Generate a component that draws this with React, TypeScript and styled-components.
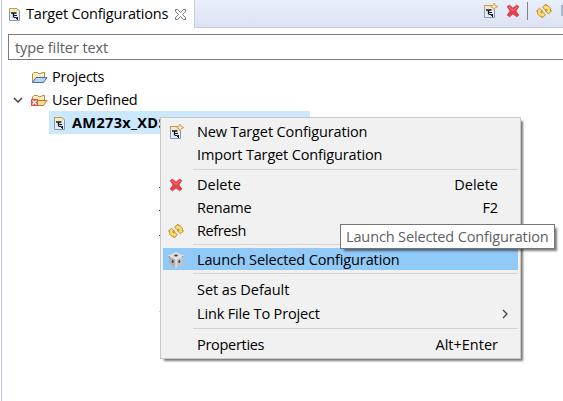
import React from "react";
import styled, { createGlobalStyle } from "styled-components";

const GlobalStyle = createGlobalStyle`
  * { box-sizing: border-box; }
  body { margin: 0; overflow: hidden; background: #fff; }
`;

const Window = styled.div`
  position: relative;
  width: 563px;
  height: 401px;
  overflow: hidden;
  background: #fff;
  color: #000;
  font-family: "Open Sans", "Noto Sans", sans-serif;
  font-size: 14.5px;
`;
const Panel = styled.div`
  margin-left: 1px;
  height: 401px;
  border-left: 1px solid #c5c6e0;
`;
const TabBar = styled.div`
  display: flex;
  height: 28px;
`;
const Tab = styled.div`
  display: flex;
  flex: none;
  align-items: center;
  width: 193px;
  height: 28px;
  padding: 0 0 0 5px;
  border-right: 1px solid #c9cde6;
`;
const Tools = styled.div`
  flex: 1;
  min-width: 0;
  overflow: hidden;
  display: flex;
  align-items: flex-start;
  padding: 3px 0 0 287px;
  background: linear-gradient(#eaeffc, #dce2f2);
  border-bottom: 1px solid #c5c9df;
`;
const ToolDivider = styled.div`
  flex: none;
  width: 1px;
  height: 18px;
  margin: -1px 8px 0 6px;
  background: #7d8088;
`;
const ClippedTool = styled.div`
  flex: none;
  width: 8px;
  height: 11px;
  margin: 2px 0 0 9px;
  background: #a9b7c9;
`;
const Text = styled.span<{ $space?: number; $bold?: boolean; $color?: string }>`
  white-space: nowrap;
  line-height: 20px;
  letter-spacing: ${(p) => p.$space ?? -0.13}px;
  font-weight: ${(p) => (p.$bold ? 700 : 400)};
  color: ${(p) => p.$color ?? "#000"};
`;
const Filter = styled.div`
  display: flex;
  align-items: center;
  width: 570px;
  height: 26px;
  margin: 6px 0 5px 6px;
  padding: 2px 0 0 6px;
  border: 1px solid #7a7a7a;
`;
const TreeRow = styled.div`
  display: flex;
  align-items: center;
  height: 23px;
  padding-left: 11px;
`;
const Twisty = styled.div`
  display: flex;
  width: 18px;
`;
const IconCell = styled.div<{ $w: number }>`
  display: flex;
  flex: none;
  width: ${(p) => p.$w}px;
`;
const Selected = styled.div`
  display: flex;
  align-items: center;
  width: 261px;
  height: 23px;
  margin-left: 47px;
  padding-left: 3px;
  background: #cce8ff;
`;
const Menu = styled.div`
  position: absolute;
  left: 160px;
  top: 117px;
  width: 361px;
  height: 242px;
  padding: 2px;
  background: #f1f1f1;
  border: 1px solid #c8c8c8;
  box-shadow: 3px 3px 2px -1px #777;
`;
const Item = styled.div<{ $active?: boolean; $h: number }>`
  display: flex;
  align-items: center;
  height: ${(p) => p.$h}px;
  padding: ${(p) => (p.$active ? 2 : 0)}px 20px 0 5px;
  background: ${(p) => (p.$active ? "#91c9f7" : "transparent")};
`;
const Shortcut = styled.div`
  display: flex;
  margin-left: auto;
`;
const Chevron = styled.div`
  display: flex;
  margin: 0 -11px 0 auto;
`;
const Separator = styled.div<{ $top: number; $bottom: number }>`
  height: 1px;
  margin: ${(p) => p.$top}px 0 ${(p) => p.$bottom}px 30px;
  background: #d2d2d2;
`;
const Tooltip = styled.div`
  position: absolute;
  left: 340px;
  top: 224px;
  display: flex;
  align-items: center;
  width: 215px;
  height: 25px;
  padding: 1px 0 0 5px;
  background: #fff;
  border: 1px solid #767676;
  box-shadow: 3px 3px 2px -1px rgba(0, 0, 0, 0.5);
`;
const Artifact = styled.div<{ $y: number; $c: string }>`
  position: absolute;
  left: 159px;
  top: ${(p) => p.$y}px;
  width: 1px;
  height: 1px;
  background: ${(p) => p.$c};
`;

const Svg = styled.svg`
  display: block;
  flex: none;
  overflow: visible;
`;

const TargetFile = ({ fresh = false }: { fresh?: boolean }) => (
  <Svg width="16" height="16" viewBox="0 0 16 16">
    <path d="M2.500 2.500h7.500l2.500 2.500v9.500h-10z" fill="#e6eff9" stroke="#8496b4" />
    <path d="M2.500 6V2.500h7.500l2.500 2.500v1" fill="#f5e8bd" stroke="#bd9f5c" />
    <path d="M4 7h5.500M6.500 7v4.500" fill="none" stroke="#15161c" strokeWidth="1.300" />
    <path d="M7 9.500h3M7 11.500h2.500v1.500M10.500 11v3" fill="none" stroke="#15161c" />
    {fresh && (
      <path
        d="M11.500.5h1l.5 2 2.500.5v1l-2.500.5-.5 2h-1l-.5-2L9 4V3l2-.5z"
        fill="#fff3cf"
        stroke="#c79e4e"
        strokeWidth=".9"
      />
    )}
  </Svg>
);
const Cross = () => (
  <Svg width="16" height="16" viewBox="0 0 16 16">
    <path
      d="M2.300 3.500 4.500 2.300 8 5.300 11.500 2.300 13.700 3.500 10.800 8 13.700 12 11.700 13.700 8 10.800 4.500 13.700 2.300 12 5.200 8z"
      fill="#e8404a"
      stroke="#d23a45"
      strokeLinejoin="round"
    />
    <path d="M4 4l4 3.500L12 4" fill="none" stroke="#f48582" />
  </Svg>
);
const RefreshIcon = () => (
  <Svg width="16" height="16" viewBox="0 0 16 16" fill="#fcdc74" stroke="#b9831c" strokeWidth=".9" strokeLinejoin="round">
    <path d="M6.500 4.200 10 1v1.500c3.200 0 5 2.500 4.300 5.500h1.200L12.500 10.700 9.500 8h1.500c.2-1.400-.2-2-1-2V7.500z" />
    <path d="M9.500 11.800 6 15v-1.500c-3.200 0-5-2.500-4.300-5.500H.5L3.500 5.300 6.500 8H5c-.2 1.400.2 2 1 2V8.500z" />
  </Svg>
);
const Folder = ({ error = false }: { error?: boolean }) => (
  <Svg width="17" height="16" viewBox="0 0 17 16">
    <path d="M1.500 13V5L3 3.500h3.500L8 5l4-1.500h1.500V8" fill="#fcedb6" stroke="#b88b3b" />
    <path
      d="M1.500 13.500 5 8.500h11l-3.500 5z"
      fill={error ? "#f9dc91" : "#b3d3f7"}
      stroke={error ? "#b77a2f" : "#476da8"}
    />
    {error && (
      <>
        <path d="M0 7h7v7H0z" fill="#d9534b" />
        <path d="M1.500 8.500l4 4m0-4-4 4" stroke="#fff" strokeWidth="1.300" />
      </>
    )}
  </Svg>
);
const Cube = () => (
  <Svg width="16" height="16" viewBox="0 0 16 16">
    <path d="M.5 3.500 8 0l7.500 3.500L8 7z" fill="#dedede" />
    <path d="M.5 3.500 8 7v9L1.500 12z" fill="#b0b0b0" />
    <path d="M15.500 3.500 8 7v9l6.500-4z" fill="#c4c4c4" />
    <path d="M.5 3.500 8 7l7.500-3.500M8 7v9" fill="none" stroke="#f2f2f2" />
    <ellipse cx="8" cy="3.500" rx="1.800" ry=".9" fill="#444" />
    <ellipse cx="4.700" cy="9.500" rx=".9" ry="1.500" fill="#3a3a3a" />
    <ellipse cx="11.300" cy="9.500" rx=".9" ry="1.500" fill="#3a3a3a" />
    <path d="M1 4l1 .8M15 4l-1 .8" stroke="#777" />
  </Svg>
);
const CloseTab = () => (
  <Svg width="11" height="11" viewBox="0 0 11 11">
    <path
      d="M.5.5h2l3 3 3-3h2v2l-3 3 3 3v2h-2l-3-3-3 3h-2v-2l3-3-3-3z"
      fill="#fff"
      stroke="#696969"
      strokeWidth=".9"
    />
  </Svg>
);

export default function App() {
  return (
    <Window>
      <GlobalStyle />
      <Panel>
        <TabBar>
          <Tab>
            <IconCell $w={19}><TargetFile /></IconCell>
            <IconCell $w={149}><Text $space={-0.2}>Target Configurations</Text></IconCell>
            <CloseTab />
          </Tab>
          <Tools>
            <IconCell $w={23}><TargetFile fresh /></IconCell>
            <IconCell $w={16}><Cross /></IconCell>
            <ToolDivider />
            <IconCell $w={16}><RefreshIcon /></IconCell>
            <ClippedTool />
          </Tools>
        </TabBar>
        <Filter><Text $space={-0.08} $color="#606060">type filter text</Text></Filter>
        <TreeRow>
          <Twisty />
          <IconCell $w={21}><Folder /></IconCell>
          <Text $space={-0.25}>Projects</Text>
        </TreeRow>
        <TreeRow>
          <Twisty>
            <Svg width="10" height="6" viewBox="0 0 10 6">
              <path d="M1 1l4 4 4-4" fill="none" stroke="#404040" strokeWidth="1.500" />
            </Svg>
          </Twisty>
          <IconCell $w={21}><Folder error /></IconCell>
          <Text $space={-0.25}>User Defined</Text>
        </TreeRow>
        <Selected>
          <IconCell $w={20}><TargetFile /></IconCell>
          <Text $bold $space={0.35}>AM273x_XDS</Text>
        </Selected>
      </Panel>

      <Artifact $y={187} $c="#333" />
      <Artifact $y={210} $c="#333" />
      <Artifact $y={235} $c="#333" />
      <Artifact $y={311} $c="#efd3a0" />

      <Menu>
        <Item $h={23}>
          <IconCell $w={29}><TargetFile fresh /></IconCell>
          <Text>New Target Configuration</Text>
        </Item>
        <Item $h={24}>
          <IconCell $w={29} />
          <Text $space={-0.15}>Import Target Configuration</Text>
        </Item>
        <Separator $top={2} $bottom={3} />
        <Item $h={23}>
          <IconCell $w={29}><Cross /></IconCell>
          <Text $space={0}>Delete</Text>
          <Shortcut><Text $space={0}>Delete</Text></Shortcut>
        </Item>
        <Item $h={23}>
          <IconCell $w={29} />
          <Text $space={-0.2}>Rename</Text>
          <Shortcut><Text>F2</Text></Shortcut>
        </Item>
        <Item $h={23}>
          <IconCell $w={29}><RefreshIcon /></IconCell>
          <Text $space={-0.4}>Refresh</Text>
        </Item>
        <Separator $top={2} $bottom={3} />
        <Item $h={22} $active>
          <IconCell $w={29}><Cube /></IconCell>
          <Text>Launch Selected Configuration</Text>
        </Item>
        <Separator $top={3} $bottom={4} />
        <Item $h={24}>
          <IconCell $w={29} />
          <Text $space={-0.06}>Set as Default</Text>
        </Item>
        <Item $h={23}>
          <IconCell $w={29} />
          <Text $space={-0.16}>Link File To Project</Text>
          <Chevron>
            <Svg width="7" height="10" viewBox="0 0 7 10">
              <path d="M1 1l4 4-4 4" fill="none" stroke="#404040" strokeWidth="1.300" />
            </Svg>
          </Chevron>
        </Item>
        <Separator $top={3} $bottom={4} />
        <Item $h={23}>
          <IconCell $w={29} />
          <Text $space={-0.3}>Properties</Text>
          <Shortcut><Text $space={0}>Alt+Enter</Text></Shortcut>
        </Item>
      </Menu>

      <Tooltip><Text $color="#606060">Launch Selected Configuration</Text></Tooltip>
    </Window>
  );
}
